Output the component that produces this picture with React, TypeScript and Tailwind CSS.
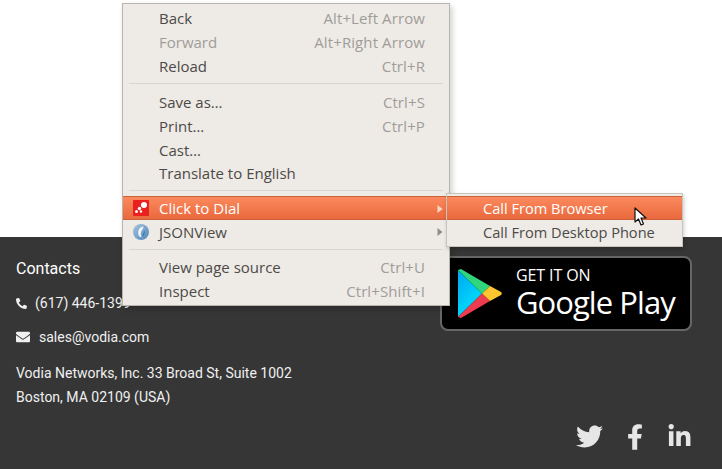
import { FaEnvelope, FaFacebookF, FaLinkedinIn, FaPhone, FaTwitter } from "react-icons/fa";

type MenuRowProps = {
  label: string;
  shortcut?: string;
  disabled?: boolean;
  short?: boolean;
};

function MenuRow({ label, shortcut, disabled, short }: MenuRowProps) {
  return (
    <div className={`flex items-center justify-between pl-[36px] pr-[24px] ${short ? "h-[23px]" : "h-[24px]"}`}>
      <span className={disabled ? "text-[#a09d99]" : "text-[#4c4a47]"}>{label}</span>
      {shortcut && <span className="tracking-[0.1px] text-[#a09d99]">{shortcut}</span>}
    </div>
  );
}

function Separator({ tall }: { tall?: boolean }) {
  return (
    <div className={`flex items-center px-[6px] ${tall ? "h-[12px] pb-[1px]" : "h-[11px]"}`}>
      <div className="h-px w-full bg-[#d8d4cf]" />
    </div>
  );
}

function Arrow({ light }: { light?: boolean }) {
  return (
    <svg width="6" height="8" viewBox="0 0 6 8" className="absolute right-[6px] top-[8px]">
      <path d="M0.5 0 L5.5 4 L0.5 8 Z" fill={light ? "#f7d9c8" : "#8f8c88"} />
    </svg>
  );
}

function DialIcon() {
  return (
    <svg width="16" height="16" viewBox="0 0 16 16" className="absolute left-[10px] top-[3px]">
      <rect width="16" height="16" rx="1" fill="#e8201f" />
      <circle cx="11" cy="5" r="3" fill="#fff" />
      <circle cx="6.5" cy="8.5" r="1.7" fill="#fff" />
      <circle cx="3.5" cy="11.5" r="1.5" fill="#fff" />
      <circle cx="8" cy="11.5" r="1.2" fill="#fff" />
    </svg>
  );
}

function JsonIcon() {
  return (
    <svg width="16" height="16" viewBox="0 0 16 16" className="absolute left-[10px] top-[4px]">
      <defs>
        <linearGradient id="json" x1="0" y1="0" x2="1" y2="1">
          <stop offset="0" stopColor="#a8c4dc" />
          <stop offset="1" stopColor="#4f86b8" />
        </linearGradient>
      </defs>
      <circle cx="8" cy="8" r="8" fill="url(#json)" />
      <path d="M10.5 2.5 C6 3 4.5 7 5.5 11 C6 13 8 13.5 9 12.5 C7.5 12 7.5 9 8.5 7 C9.3 5.5 10.5 4.5 10.5 2.5 Z" fill="#eef3f7" />
      <path d="M11 6 C12.5 8.5 11 12 9 12.5 C10.5 10.5 11 8.5 11 6 Z" fill="#2f6ea5" />
    </svg>
  );
}

function PlayLogo() {
  return (
    <svg width="44" height="49" viewBox="0 0 44 49" className="shrink-0">
      <path d="M0 1 L0 48 L24 24.5 Z" fill="url(#playBlue)" />
      <path d="M0 1 L24 24.5 L32 17 L3 0 Z" fill="#2fd67c" />
      <path d="M0 48 L24 24.5 L32 32 L3 49 Z" fill="#ee3b50" />
      <path d="M32 17 L24 24.5 L32 32 L43 26 Q44.5 24.5 43 23 Z" fill="#fdc52f" />
      <defs>
        <linearGradient id="playBlue" x1="0" y1="0" x2="0.6" y2="1">
          <stop offset="0" stopColor="#00a6ee" />
          <stop offset="1" stopColor="#00e3ff" />
        </linearGradient>
      </defs>
    </svg>
  );
}

export default function App() {
  return (
    <div className="relative flex h-[469px] w-[722px] flex-col overflow-hidden bg-white font-['Roboto',sans-serif]">
      <div className="h-[237px] shrink-0 bg-white" />

      {/* Footer */}
      <footer className="flex flex-1 justify-between bg-[#363636] pl-4 pr-[30px] text-[14px] text-[#f0f0f0]">
        <div className="pt-[22px]">
          <h3 className="h-[20px] text-[16px] leading-[20px] text-white">Contacts</h3>
          <div className="mt-[14px] flex h-[20px] items-center gap-[8px]">
            <FaPhone className="h-[11px] w-[11px] -scale-x-100" />
            <span>(617) 446-1399</span>
          </div>
          <div className="mt-[14px] flex h-[20px] items-center gap-[9px]">
            <FaEnvelope className="h-[14px] w-[14px]" />
            <span>sales@vodia.com</span>
          </div>
          <p className="mt-[14px] leading-[24px]">
            Vodia Networks, Inc. 33 Broad St, Suite 1002
            <br />
            Boston, MA 02109 (USA)
          </p>
        </div>

        <div className="flex flex-col items-end pt-[19px]">
          <div className="flex h-[75px] w-[252px] items-center rounded-[8px] border-2 border-[#666666] bg-black pl-[16px]">
            <PlayLogo />
            <div className="ml-[14px] flex flex-col text-white">
              <span className="h-[17px] font-['Open_Sans',sans-serif] text-[16px] leading-[17px] tracking-[-0.1px]">GET IT ON</span>
              <span className="h-[37px] font-['Open_Sans',sans-serif] text-[31px] font-medium leading-[37px] tracking-[-0.95px]">
                Google Play
              </span>
            </div>
          </div>
          <div className="mt-[92px] flex items-center text-[#e6e6e6]">
            <FaTwitter className="h-[27px] w-[29px]" />
            <FaFacebookF className="ml-[23px] h-[26px] w-[16px]" />
            <FaLinkedinIn className="ml-[24px] h-[25px] w-[25px]" />
          </div>
        </div>
      </footer>

      {/* Context menu */}
      <div className="absolute left-[122px] top-[3px] w-[328px] border border-[#b9b5ae] bg-[#eeeae6] py-[2px] font-['Open_Sans',sans-serif] text-[15px] shadow-[2px_3px_6px_rgba(0,0,0,0.2)]">
        <MenuRow label="Back" shortcut="Alt+Left Arrow" />
        <MenuRow label="Forward" shortcut="Alt+Right Arrow" disabled />
        <MenuRow label="Reload" shortcut="Ctrl+R" />
        <Separator tall />
        <MenuRow label="Save as…" shortcut="Ctrl+S" />
        <MenuRow label="Print…" shortcut="Ctrl+P" />
        <MenuRow label="Cast…" />
        <MenuRow label="Translate to English" short />
        <Separator />
        <div className="relative flex h-[24px] items-center border-y border-[#c9623a] bg-gradient-to-b from-[#fb8a5e] to-[#e9683c] pl-[36px] text-white">
          <DialIcon />
          Click to Dial
          <Arrow light />
        </div>
        <div className="relative flex h-[24px] items-center pl-[36px] text-[#4c4a47]">
          <JsonIcon />
          JSONView
          <Arrow />
        </div>
        <Separator />
        <MenuRow label="View page source" shortcut="Ctrl+U" />
        <MenuRow label="Inspect" shortcut="Ctrl+Shift+I" />
      </div>

      {/* Submenu */}
      <div className="absolute left-[446px] top-[193px] w-[237px] border border-[#c8c3bb] bg-[#eeeae6] py-[2px] font-['Open_Sans',sans-serif] text-[14.6px] shadow-[1px_2px_4px_rgba(0,0,0,0.2)]">
        <div className="flex h-[24px] items-center border-y border-[#c9623a] bg-gradient-to-b from-[#fb8a5e] to-[#e9683c] pl-[36px] pt-[1px] text-white">
          Call From Browser
        </div>
        <div className="flex h-[24px] items-center pl-[36px] pt-[2px] text-[#4c4a47]">Call From Desktop Phone</div>
      </div>

      {/* Mouse cursor */}
      <svg width="14" height="20" viewBox="0 0 14 20" className="absolute left-[634px] top-[207px]">
        <path d="M1 1 L1 15 L4.5 12 L7 18 L9.5 17 L7 11 L12 11 Z" fill="#fff" stroke="#111" strokeWidth="1.2" strokeLinejoin="round" />
      </svg>
    </div>
  );
}
